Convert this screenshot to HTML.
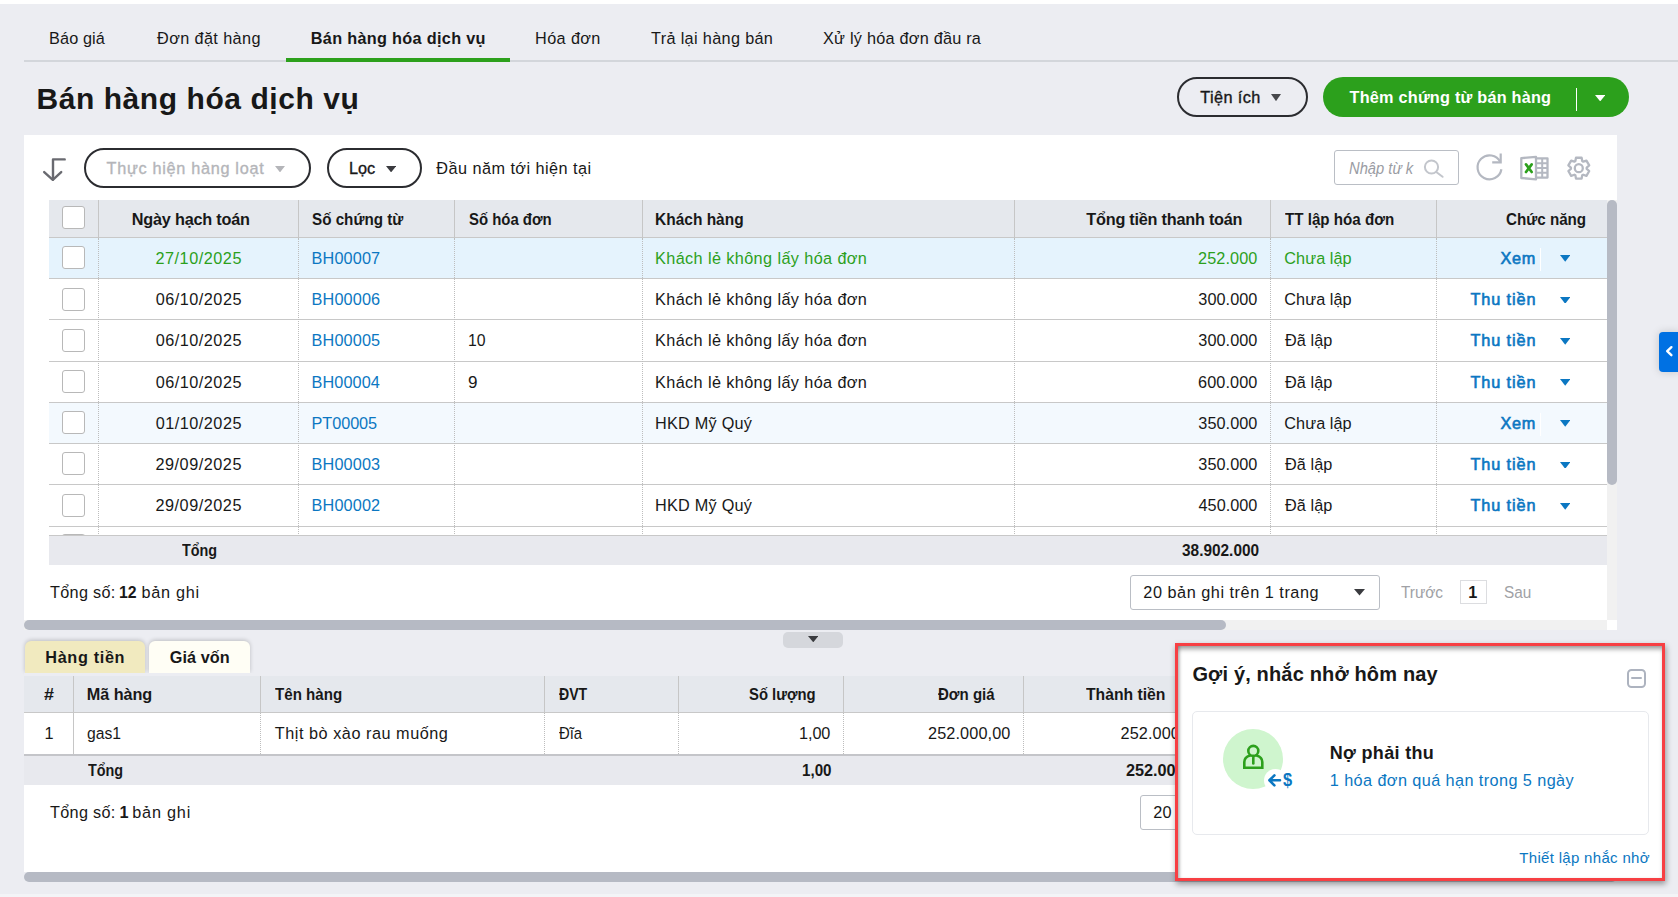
<!DOCTYPE html>
<html lang="vi">
<head>
<meta charset="utf-8">
<title>Bán hàng hóa dịch vụ</title>
<style>
*{box-sizing:border-box}
html,body{margin:0;padding:0}
body{width:1678px;height:897px;overflow:hidden;position:relative;background:#ecedf2;font-family:"Liberation Sans","DejaVu Sans",sans-serif;color:#181818}
div,span,a,h1,h2,b,i,label,button,svg,section,nav,header,footer{position:absolute;margin:0;padding:0}
.t{white-space:pre;display:block;text-decoration:none;font-weight:400}
.cb{width:23px;height:23px;border:1px solid #b8b8b8;border-radius:3px;background:#fff}
.vs{width:1px;background:#c6c6c6}
.vd{width:0;border-left:1px dotted #bdbdbd}
.hl{height:1px;background:#c8c8c8}

</style>
</head>
<body>
<div style="left:0px;top:0px;width:1678px;height:4px;background:#fff"></div>
<div style="left:0px;top:894.4px;width:1678px;height:2.6px;background:#f3f4f7"></div>
<nav style="left:0;top:0;width:1678px;height:62px">
<div style="left:24px;top:60px;width:1654px;height:2px;background:#d3d6db"></div>
<div style="left:286px;top:57.5px;width:224px;height:4.5px;background:#2ca01c"></div>
<a class="t" style="left:49.03px;top:28.00px;font-size:16.25px;line-height:20px;color:#181818;letter-spacing:0.125px;">Báo giá</a>
<a class="t" style="left:157.05px;top:28.00px;font-size:16.25px;line-height:20px;color:#181818;letter-spacing:0.379px;">Đơn đặt hàng</a>
<a class="t" style="left:310.78px;top:28.00px;font-size:16.25px;line-height:20px;color:#181818;font-weight:700;letter-spacing:0.312px;">Bán hàng hóa dịch vụ</a>
<a class="t" style="left:535.03px;top:28.00px;font-size:16.25px;line-height:20px;color:#181818;letter-spacing:0.388px;">Hóa đơn</a>
<a class="t" style="left:651.05px;top:28.00px;font-size:16.25px;line-height:20px;color:#181818;letter-spacing:0.335px;">Trả lại hàng bán</a>
<a class="t" style="left:823.05px;top:28.00px;font-size:16.25px;line-height:20px;color:#181818;letter-spacing:0.233px;">Xử lý hóa đơn đầu ra</a>
</nav>
<h1 class="t" style="left:36.42px;top:79.50px;font-size:30px;line-height:38px;color:#181818;font-weight:700;letter-spacing:0.569px;">Bán hàng hóa dịch vụ</h1>
<div style="left:1177px;top:77px;width:131px;height:40px;border:2px solid #2b2c30;border-radius:20px"></div>
<span class="t" style="left:1200.25px;top:87.00px;font-size:16.25px;line-height:20px;color:#181818;letter-spacing:0.409px;-webkit-text-stroke:0.35px #181818;">Tiện ích</span>
<svg style="left:1271px;top:94px" width="10" height="7.2" viewBox="0 0 10 7.2"><path d="M0 0h10L5 7.2z" fill="#47484c"/></svg>
<div style="left:1323px;top:77px;width:306px;height:40px;background:#2ca01c;border-radius:20px"></div>
<span class="t" style="left:1349.50px;top:87.00px;font-size:16.25px;line-height:20px;color:#fff;font-weight:700;letter-spacing:0.223px;">Thêm chứng từ bán hàng</span>
<div style="left:1575.8px;top:88px;width:1.3px;height:23px;background:#fff"></div>
<svg style="left:1595px;top:95px" width="10.4" height="6.4" viewBox="0 0 10.4 6.4"><path d="M0 0h10.4L5.2 6.4z" fill="#fff"/></svg>
<section style="left:0;top:0;width:1678px;height:640px">
<div style="left:24px;top:135px;width:1593px;height:495px;background:#fff"></div>
<svg style="left:42px;top:157px" width="25" height="25" viewBox="42 157 25 25" fill="none" stroke="#696a70" stroke-width="2.4" stroke-linecap="round" stroke-linejoin="round"><path d="M64.7 159.4H53V179.6"/><path d="M44.2 172.1L52.8 179.8L61.2 172.1"/></svg>
<div style="left:84px;top:148.3px;width:227.3px;height:39.3px;border:2px solid #2b2c30;border-radius:20px"></div>
<span class="t" style="left:106.55px;top:158.00px;font-size:16.25px;line-height:20px;color:#b4b5b9;letter-spacing:0.695px;-webkit-text-stroke:0.35px #b4b5b9;">Thực hiện hàng loạt</span>
<svg style="left:274.5px;top:165.8px" width="10" height="6.4" viewBox="0 0 10 6.4"><path d="M0 0h10L5 6.4z" fill="#b4b5b9"/></svg>
<div style="left:326.8px;top:148.3px;width:95.3px;height:39.3px;border:2px solid #2b2c30;border-radius:20px"></div>
<span class="t" style="left:349.03px;top:158.00px;font-size:16.25px;line-height:20px;color:#181818;letter-spacing:0.012px;-webkit-text-stroke:0.35px #181818;">Lọc</span>
<svg style="left:385.5px;top:165.8px" width="10.2" height="6.4" viewBox="0 0 10.2 6.4"><path d="M0 0h10.2L5.1 6.4z" fill="#3a3b3f"/></svg>
<span class="t" style="left:436.30px;top:158.00px;font-size:16.25px;line-height:20px;color:#181818;letter-spacing:0.454px;">Đầu năm tới hiện tại</span>
<div style="left:1334px;top:150px;width:124.5px;height:34.5px;border:1px solid #babec5;border-radius:3px;background:#fff"></div>
<span class="t" style="left:1348.57px;top:158.00px;font-size:16.25px;line-height:20px;color:#9a9ca3;font-style:italic;transform:scaleX(0.9071);transform-origin:0 0;">Nhập từ k</span>
<svg style="left:1422px;top:157px" width="24" height="24" viewBox="1422 157 24 24" fill="none" stroke="#c3c6cc" stroke-width="2" stroke-linecap="round"><circle cx="1431.5" cy="167" r="6.6"/><path d="M1436.6 172.2L1442.6 176.8"/></svg>
<svg style="left:1474px;top:151px" width="32" height="32" viewBox="1474 151 32 32" fill="none" stroke="#b4b8c1" stroke-width="2.2" stroke-linecap="butt" stroke-linejoin="miter"><path d="M1500.3 162.0A12 12 0 1 0 1501.4 169.3"/><path d="M1500.7 153.4V162.3H1492.2"/></svg>
<svg style="left:1518px;top:154px" width="32" height="28" viewBox="1518 154 32 28" fill="none" stroke="#b4b8c1" stroke-width="2.3" stroke-linejoin="round"><path d="M1521.3 158.2L1536 156.8V179.4L1521.3 178z" fill="#fff"/><path d="M1536.9 158.3H1547.5V177.6H1536.9" /><path d="M1536.9 163.2H1547.5M1536.9 168H1547.5M1536.9 172.8H1547.5M1542.2 158.3V177.6" stroke-width="2"/><path d="M1526 164.4L1531.7 172M1531.7 164.4L1526 172" stroke="#2ca01c" stroke-width="2.7" stroke-linecap="round"/></svg>
<svg style="left:1564px;top:153px" width="30" height="30" viewBox="1564 153 30 30" fill="none" stroke="#b4b8c1" stroke-width="2.3" stroke-linejoin="round"><path d="M1576.00 157.77L1581.60 157.77L1582.24 161.09L1583.24 161.67L1586.44 160.56L1589.23 165.40L1586.68 167.62L1586.68 168.78L1589.23 171.00L1586.44 175.84L1583.24 174.73L1582.24 175.31L1581.60 178.63L1576.00 178.63L1575.36 175.31L1574.36 174.73L1571.16 175.84L1568.37 171.00L1570.92 168.78L1570.92 167.62L1568.37 165.40L1571.16 160.56L1574.36 161.67L1575.36 161.09z"/><circle cx="1578.8" cy="168.2" r="4"/></svg>
<div style="left:49px;top:200px;width:1558px;height:37.5px;background:#e5e8ed"></div>
<div style="left:49px;top:237px;width:1558px;height:1px;background:#c8c8c8"></div>
<div class="vs" style="left:97.75px;top:200px;width:1px;height:37.5px;"></div>
<div class="vs" style="left:297.5px;top:200px;width:1px;height:37.5px;"></div>
<div class="vs" style="left:453.75px;top:200px;width:1px;height:37.5px;"></div>
<div class="vs" style="left:641.5px;top:200px;width:1px;height:37.5px;"></div>
<div class="vs" style="left:1013.75px;top:200px;width:1px;height:37.5px;"></div>
<div class="vs" style="left:1270px;top:200px;width:1px;height:37.5px;"></div>
<div class="vs" style="left:1435.75px;top:200px;width:1px;height:37.5px;"></div>
<div class="cb" style="left:62px;top:206.3px;width:23px;height:23px;"></div>
<span class="t" style="left:131.78px;top:209.00px;font-size:16.25px;line-height:20px;color:#181818;font-weight:700;letter-spacing:-0.211px;">Ngày hạch toán</span>
<span class="t" style="left:312.36px;top:209.00px;font-size:16.25px;line-height:20px;color:#181818;font-weight:700;transform:scaleX(0.9357);transform-origin:0 0;">Số chứng từ</span>
<span class="t" style="left:468.57px;top:209.00px;font-size:16.25px;line-height:20px;color:#181818;font-weight:700;transform:scaleX(0.9175);transform-origin:0 0;">Số hóa đơn</span>
<span class="t" style="left:655.33px;top:209.00px;font-size:16.25px;line-height:20px;color:#181818;font-weight:700;transform:scaleX(0.9534);transform-origin:0 0;">Khách hàng</span>
<span class="t" style="left:1086.30px;top:209.00px;font-size:16.25px;line-height:20px;color:#181818;font-weight:700;letter-spacing:-0.233px;">Tổng tiền thanh toán</span>
<span class="t" style="left:1285.05px;top:209.00px;font-size:16.25px;line-height:20px;color:#181818;font-weight:700;transform:scaleX(0.9318);transform-origin:0 0;">TT lập hóa đơn</span>
<span class="t" style="left:1506.33px;top:209.00px;font-size:16.25px;line-height:20px;color:#181818;font-weight:700;transform:scaleX(0.9341);transform-origin:0 0;">Chức năng</span>
<div style="left:49px;top:238px;width:1558px;height:41.25px;background:#e5f3fd"></div>
<div style="left:49px;top:278px;width:1558px;height:1px;background:#c8c8c8"></div>
<div class="cb" style="left:62px;top:246.3px;width:23px;height:23px;"></div>
<span class="t" style="left:155.44px;top:248.00px;font-size:16.25px;line-height:20px;color:#2ca01c;letter-spacing:0.521px;">27/10/2025</span>
<a class="t" style="left:311.53px;top:248.00px;font-size:16.25px;line-height:20px;color:#0b77c2;letter-spacing:0.144px;">BH00007</a>
<span class="t" style="left:655.03px;top:248.00px;font-size:16.25px;line-height:20px;color:#2ca01c;letter-spacing:0.388px;">Khách lẻ không lấy hóa đơn</span>
<span class="t" style="left:1198.04px;top:248.00px;font-size:16.25px;line-height:20px;color:#2ca01c;letter-spacing:0.104px;">252.000</span>
<span class="t" style="left:1284.29px;top:248.00px;font-size:16.25px;line-height:20px;color:#2ca01c;letter-spacing:0.069px;">Chưa lập</span>
<a class="t" style="left:1500.55px;top:248.00px;font-size:16.25px;line-height:20px;color:#0b77c2;letter-spacing:0.691px;-webkit-text-stroke:0.6px #0b77c2;">Xem</a>
<div style="left:1539.8px;top:247.5px;width:1.2px;height:23.5px;background:#fff"></div>
<svg style="left:1560px;top:255.30px" width="10.4" height="6.8" viewBox="0 0 10.4 6.8"><path d="M0 0h10.4L5.2 6.8z" fill="#0b77c2"/></svg>
<div style="left:49px;top:319px;width:1558px;height:1px;background:#c8c8c8"></div>
<div class="cb" style="left:62px;top:288.3px;width:23px;height:23px;"></div>
<span class="t" style="left:155.69px;top:289.00px;font-size:16.25px;line-height:20px;color:#181818;letter-spacing:0.493px;">06/10/2025</span>
<a class="t" style="left:311.53px;top:289.00px;font-size:16.25px;line-height:20px;color:#0b77c2;letter-spacing:0.144px;">BH00006</a>
<span class="t" style="left:655.03px;top:289.00px;font-size:16.25px;line-height:20px;color:#181818;letter-spacing:0.388px;">Khách lẻ không lấy hóa đơn</span>
<span class="t" style="left:1198.29px;top:289.00px;font-size:16.25px;line-height:20px;color:#181818;letter-spacing:0.062px;">300.000</span>
<span class="t" style="left:1284.29px;top:289.00px;font-size:16.25px;line-height:20px;color:#181818;letter-spacing:0.069px;">Chưa lập</span>
<a class="t" style="left:1470.55px;top:289.00px;font-size:16.25px;line-height:20px;color:#0b77c2;letter-spacing:0.879px;-webkit-text-stroke:0.6px #0b77c2;">Thu tiền</a>
<svg style="left:1560px;top:296.55px" width="10.4" height="6.8" viewBox="0 0 10.4 6.8"><path d="M0 0h10.4L5.2 6.8z" fill="#0b77c2"/></svg>
<div style="left:49px;top:361px;width:1558px;height:1px;background:#c8c8c8"></div>
<div class="cb" style="left:62px;top:329.3px;width:23px;height:23px;"></div>
<span class="t" style="left:155.69px;top:330.00px;font-size:16.25px;line-height:20px;color:#181818;letter-spacing:0.493px;">06/10/2025</span>
<a class="t" style="left:311.53px;top:330.00px;font-size:16.25px;line-height:20px;color:#0b77c2;letter-spacing:0.144px;">BH00005</a>
<span class="t" style="left:467.81px;top:330.00px;font-size:16.25px;line-height:20px;color:#181818;transform:scaleX(0.9727);transform-origin:0 0;">10</span>
<span class="t" style="left:655.03px;top:330.00px;font-size:16.25px;line-height:20px;color:#181818;letter-spacing:0.388px;">Khách lẻ không lấy hóa đơn</span>
<span class="t" style="left:1198.29px;top:330.00px;font-size:16.25px;line-height:20px;color:#181818;letter-spacing:0.062px;">300.000</span>
<span class="t" style="left:1285.05px;top:330.00px;font-size:16.25px;line-height:20px;color:#181818;letter-spacing:0.077px;">Đã lập</span>
<a class="t" style="left:1470.55px;top:330.00px;font-size:16.25px;line-height:20px;color:#0b77c2;letter-spacing:0.879px;-webkit-text-stroke:0.6px #0b77c2;">Thu tiền</a>
<svg style="left:1560px;top:337.80px" width="10.4" height="6.8" viewBox="0 0 10.4 6.8"><path d="M0 0h10.4L5.2 6.8z" fill="#0b77c2"/></svg>
<div style="left:49px;top:402px;width:1558px;height:1px;background:#c8c8c8"></div>
<div class="cb" style="left:62px;top:370.3px;width:23px;height:23px;"></div>
<span class="t" style="left:155.69px;top:372.00px;font-size:16.25px;line-height:20px;color:#181818;letter-spacing:0.493px;">06/10/2025</span>
<a class="t" style="left:311.53px;top:372.00px;font-size:16.25px;line-height:20px;color:#0b77c2;letter-spacing:0.102px;">BH00004</a>
<span class="t" style="left:467.70px;top:372.00px;font-size:16.25px;line-height:20px;color:#181818;transform:scaleX(1.0503);transform-origin:0 0;">9</span>
<span class="t" style="left:655.03px;top:372.00px;font-size:16.25px;line-height:20px;color:#181818;letter-spacing:0.388px;">Khách lẻ không lấy hóa đơn</span>
<span class="t" style="left:1198.04px;top:372.00px;font-size:16.25px;line-height:20px;color:#181818;letter-spacing:0.104px;">600.000</span>
<span class="t" style="left:1285.05px;top:372.00px;font-size:16.25px;line-height:20px;color:#181818;letter-spacing:0.077px;">Đã lập</span>
<a class="t" style="left:1470.55px;top:372.00px;font-size:16.25px;line-height:20px;color:#0b77c2;letter-spacing:0.879px;-webkit-text-stroke:0.6px #0b77c2;">Thu tiền</a>
<svg style="left:1560px;top:379.05px" width="10.4" height="6.8" viewBox="0 0 10.4 6.8"><path d="M0 0h10.4L5.2 6.8z" fill="#0b77c2"/></svg>
<div style="left:49px;top:403px;width:1558px;height:41.25px;background:#f3f9fe"></div>
<div style="left:49px;top:443px;width:1558px;height:1px;background:#c8c8c8"></div>
<div class="cb" style="left:62px;top:411.3px;width:23px;height:23px;"></div>
<span class="t" style="left:155.69px;top:413.00px;font-size:16.25px;line-height:20px;color:#181818;letter-spacing:0.493px;">01/10/2025</span>
<a class="t" style="left:311.53px;top:413.00px;font-size:16.25px;line-height:20px;color:#0b77c2;letter-spacing:-0.054px;">PT00005</a>
<span class="t" style="left:655.03px;top:413.00px;font-size:16.25px;line-height:20px;color:#181818;letter-spacing:0.241px;">HKD Mỹ Quý</span>
<span class="t" style="left:1198.29px;top:413.00px;font-size:16.25px;line-height:20px;color:#181818;letter-spacing:0.062px;">350.000</span>
<span class="t" style="left:1284.29px;top:413.00px;font-size:16.25px;line-height:20px;color:#181818;letter-spacing:0.069px;">Chưa lập</span>
<a class="t" style="left:1500.55px;top:413.00px;font-size:16.25px;line-height:20px;color:#0b77c2;letter-spacing:0.691px;-webkit-text-stroke:0.6px #0b77c2;">Xem</a>
<div style="left:1539.8px;top:412.5px;width:1.2px;height:23.5px;background:#fff"></div>
<svg style="left:1560px;top:420.30px" width="10.4" height="6.8" viewBox="0 0 10.4 6.8"><path d="M0 0h10.4L5.2 6.8z" fill="#0b77c2"/></svg>
<div style="left:49px;top:484px;width:1558px;height:1px;background:#c8c8c8"></div>
<div class="cb" style="left:62px;top:452.3px;width:23px;height:23px;"></div>
<span class="t" style="left:155.44px;top:454.00px;font-size:16.25px;line-height:20px;color:#181818;letter-spacing:0.521px;">29/09/2025</span>
<a class="t" style="left:311.53px;top:454.00px;font-size:16.25px;line-height:20px;color:#0b77c2;letter-spacing:0.144px;">BH00003</a>
<span class="t" style="left:1198.29px;top:454.00px;font-size:16.25px;line-height:20px;color:#181818;letter-spacing:0.062px;">350.000</span>
<span class="t" style="left:1285.05px;top:454.00px;font-size:16.25px;line-height:20px;color:#181818;letter-spacing:0.077px;">Đã lập</span>
<a class="t" style="left:1470.55px;top:454.00px;font-size:16.25px;line-height:20px;color:#0b77c2;letter-spacing:0.879px;-webkit-text-stroke:0.6px #0b77c2;">Thu tiền</a>
<svg style="left:1560px;top:461.55px" width="10.4" height="6.8" viewBox="0 0 10.4 6.8"><path d="M0 0h10.4L5.2 6.8z" fill="#0b77c2"/></svg>
<div style="left:49px;top:526px;width:1558px;height:1px;background:#c8c8c8"></div>
<div class="cb" style="left:62px;top:494.3px;width:23px;height:23px;"></div>
<span class="t" style="left:155.44px;top:495.00px;font-size:16.25px;line-height:20px;color:#181818;letter-spacing:0.521px;">29/09/2025</span>
<a class="t" style="left:311.53px;top:495.00px;font-size:16.25px;line-height:20px;color:#0b77c2;letter-spacing:0.144px;">BH00002</a>
<span class="t" style="left:655.03px;top:495.00px;font-size:16.25px;line-height:20px;color:#181818;letter-spacing:0.241px;">HKD Mỹ Quý</span>
<span class="t" style="left:1198.55px;top:495.00px;font-size:16.25px;line-height:20px;color:#181818;letter-spacing:0.020px;">450.000</span>
<span class="t" style="left:1285.05px;top:495.00px;font-size:16.25px;line-height:20px;color:#181818;letter-spacing:0.077px;">Đã lập</span>
<a class="t" style="left:1470.55px;top:495.00px;font-size:16.25px;line-height:20px;color:#0b77c2;letter-spacing:0.879px;-webkit-text-stroke:0.6px #0b77c2;">Thu tiền</a>
<svg style="left:1560px;top:502.80px" width="10.4" height="6.8" viewBox="0 0 10.4 6.8"><path d="M0 0h10.4L5.2 6.8z" fill="#0b77c2"/></svg>
<div class="cb" style="left:62px;top:534.2px;width:23px;height:6px;border-bottom:0;border-radius:3px 3px 0 0"></div>
<div class="vd" style="left:97.75px;top:238px;width:0px;height:296px;"></div>
<div class="vd" style="left:297.5px;top:238px;width:0px;height:296px;"></div>
<div class="vd" style="left:453.75px;top:238px;width:0px;height:296px;"></div>
<div class="vd" style="left:641.5px;top:238px;width:0px;height:296px;"></div>
<div class="vd" style="left:1013.75px;top:238px;width:0px;height:296px;"></div>
<div class="vd" style="left:1270px;top:238px;width:0px;height:296px;"></div>
<div class="vd" style="left:1435.75px;top:238px;width:0px;height:296px;"></div>
<div style="left:49px;top:535px;width:1558px;height:29.5px;background:#e8e9ee;border-top:1px solid #c8c8c8"></div>
<span class="t" style="left:181.65px;top:540.00px;font-size:16.25px;line-height:20px;color:#181818;font-weight:700;transform:scaleX(0.8845);transform-origin:0 0;">Tổng</span>
<span class="t" style="left:1182.16px;top:540.00px;font-size:16.25px;line-height:20px;color:#181818;font-weight:700;transform:scaleX(0.9476);transform-origin:0 0;">38.902.000</span>
<div style="left:1607px;top:200px;width:10px;height:420px;background:#f1f1f1"></div>
<div style="left:1607px;top:200px;width:10px;height:285px;background:#b6bac4;border-radius:5px"></div>
<div style="left:24px;top:620px;width:1583px;height:10px;background:#f1f1f1"></div>
<div style="left:24px;top:620px;width:1202px;height:9.5px;background:#b6bac4;border-radius:5px"></div>
<div style="left:1607px;top:620px;width:10px;height:10px;background:#fff"></div>
<span class="t" style="left:50.05px;top:582.00px;font-size:16.25px;line-height:20px;color:#181818;letter-spacing:0.277px;">Tổng số:</span>
<span class="t" style="left:119.06px;top:582.00px;font-size:16.25px;line-height:20px;color:#181818;font-weight:700;transform:scaleX(0.9727);transform-origin:0 0;">12</span>
<span class="t" style="left:141.53px;top:582.00px;font-size:16.25px;line-height:20px;color:#181818;letter-spacing:0.704px;">bản ghi</span>
<div style="left:1130px;top:575px;width:250px;height:35px;border:1px solid #babec5;border-radius:3px;background:#fff"></div>
<span class="t" style="left:1143.34px;top:582.00px;font-size:16.25px;line-height:20px;color:#181818;letter-spacing:0.530px;">20 bản ghi trên 1 trang</span>
<svg style="left:1354.3px;top:589.4px" width="11" height="6.6" viewBox="0 0 11 6.6"><path d="M0 0h11L5.5 6.6z" fill="#3a3b3f"/></svg>
<span class="t" style="left:1401.06px;top:582.00px;font-size:16.25px;line-height:20px;color:#a0a1a5;transform:scaleX(0.9456);transform-origin:0 0;">Trước</span>
<div style="left:1460px;top:580px;width:27px;height:23.7px;border:1px solid #dcdde0;background:#fff"></div>
<span class="t" style="left:1468.18px;top:582.00px;font-size:16.25px;line-height:20px;color:#181818;font-weight:700;">1</span>
<span class="t" style="left:1504.22px;top:582.00px;font-size:16.25px;line-height:20px;color:#a0a1a5;transform:scaleX(0.9457);transform-origin:0 0;">Sau</span>
</section>
<div style="left:782.5px;top:632px;width:60px;height:16px;background:#d5d7dc;border-radius:5px"></div>
<svg style="left:807.5px;top:635.5px" width="10.5" height="6.3" viewBox="0 0 10.5 6.3"><path d="M0 0h10.5L5.25 6.3z" fill="#3a3b3f"/></svg>
<section style="left:0;top:0;width:1678px;height:897px">
<div style="left:24.5px;top:641px;width:120px;height:32px;background:#f1eabf;border-radius:6px 6px 0 0;box-shadow:0 -1px 4px rgba(0,0,0,.2)"></div>
<div style="left:148.8px;top:641px;width:100.8px;height:32px;background:#fffef5;border-radius:6px 6px 0 0;box-shadow:0 -1px 4px rgba(0,0,0,.2)"></div>
<div style="left:24px;top:673px;width:1593px;height:3px;background:#ecedf2"></div>
<span class="t" style="left:45.28px;top:647.00px;font-size:16.25px;line-height:20px;color:#181818;font-weight:700;letter-spacing:0.653px;">Hàng tiền</span>
<span class="t" style="left:169.79px;top:647.00px;font-size:16.25px;line-height:20px;color:#181818;font-weight:700;letter-spacing:0.066px;">Giá vốn</span>
<div style="left:24px;top:675.75px;width:1593px;height:196.5px;background:#fff"></div>
<div style="left:24px;top:675.75px;width:1593px;height:36.5px;background:#e5e8ed"></div>
<div style="left:24px;top:712px;width:1593px;height:1px;background:#c8c8c8"></div>
<div class="vs" style="left:72.75px;top:676px;width:1px;height:36px;"></div>
<div class="vs" style="left:259.5px;top:676px;width:1px;height:36px;"></div>
<div class="vs" style="left:543.75px;top:676px;width:1px;height:36px;"></div>
<div class="vs" style="left:677.5px;top:676px;width:1px;height:36px;"></div>
<div class="vs" style="left:842.5px;top:676px;width:1px;height:36px;"></div>
<div class="vs" style="left:1022.75px;top:676px;width:1px;height:36px;"></div>
<div class="vs" style="left:1203px;top:676px;width:1px;height:36px;"></div>
<div class="vs" style="left:72.75px;top:713px;width:1px;height:41px;"></div>
<div class="vd" style="left:259.5px;top:713px;width:0px;height:41px;"></div>
<div class="vd" style="left:543.75px;top:713px;width:0px;height:41px;"></div>
<div class="vd" style="left:677.5px;top:713px;width:0px;height:41px;"></div>
<div class="vd" style="left:842.5px;top:713px;width:0px;height:41px;"></div>
<div class="vd" style="left:1022.75px;top:713px;width:0px;height:41px;"></div>
<div class="vd" style="left:1203px;top:713px;width:0px;height:41px;"></div>
<span class="t" style="left:43.97px;top:684.00px;font-size:16.25px;line-height:20px;color:#181818;font-weight:700;transform:scaleX(1.1005);transform-origin:0 0;">#</span>
<span class="t" style="left:86.78px;top:684.00px;font-size:16.25px;line-height:20px;color:#181818;font-weight:700;letter-spacing:-0.067px;">Mã hàng</span>
<span class="t" style="left:275.05px;top:684.00px;font-size:16.25px;line-height:20px;color:#181818;font-weight:700;transform:scaleX(0.9300);transform-origin:0 0;">Tên hàng</span>
<span class="t" style="left:558.80px;top:684.00px;font-size:16.25px;line-height:20px;color:#181818;font-weight:700;transform:scaleX(0.8683);transform-origin:0 0;">ĐVT</span>
<span class="t" style="left:748.82px;top:684.00px;font-size:16.25px;line-height:20px;color:#181818;font-weight:700;transform:scaleX(0.9132);transform-origin:0 0;">Số lượng</span>
<span class="t" style="left:938.30px;top:684.00px;font-size:16.25px;line-height:20px;color:#181818;font-weight:700;transform:scaleX(0.9248);transform-origin:0 0;">Đơn giá</span>
<span class="t" style="left:1085.80px;top:684.00px;font-size:16.25px;line-height:20px;color:#181818;font-weight:700;transform:scaleX(0.9673);transform-origin:0 0;">Thành tiền</span>
<span class="t" style="left:44.48px;top:723.00px;font-size:16.25px;line-height:20px;color:#181818;">1</span>
<span class="t" style="left:87.31px;top:723.00px;font-size:16.25px;line-height:20px;color:#181818;transform:scaleX(0.9671);transform-origin:0 0;">gas1</span>
<span class="t" style="left:274.80px;top:723.00px;font-size:16.25px;line-height:20px;color:#181818;letter-spacing:0.526px;">Thịt bò xào rau muống</span>
<span class="t" style="left:558.80px;top:723.00px;font-size:16.25px;line-height:20px;color:#181818;transform:scaleX(0.9137);transform-origin:0 0;">Đĩa</span>
<span class="t" style="left:799.03px;top:723.00px;font-size:16.25px;line-height:20px;color:#181818;letter-spacing:-0.086px;">1,00</span>
<span class="t" style="left:928.04px;top:723.00px;font-size:16.25px;line-height:20px;color:#181818;letter-spacing:0.115px;">252.000,00</span>
<span class="t" style="left:1120.54px;top:723.00px;font-size:16.25px;line-height:20px;color:#181818;letter-spacing:0.104px;">252.000</span>
<div style="left:24px;top:753.5px;width:1593px;height:2px;background:#c4c5c9"></div>
<div style="left:24px;top:755.5px;width:1593px;height:29px;background:#e8e9ee"></div>
<span class="t" style="left:87.80px;top:760.00px;font-size:16.25px;line-height:20px;color:#181818;font-weight:700;transform:scaleX(0.8845);transform-origin:0 0;">Tổng</span>
<span class="t" style="left:801.85px;top:760.00px;font-size:16.25px;line-height:20px;color:#181818;font-weight:700;transform:scaleX(0.9331);transform-origin:0 0;">1,00</span>
<span class="t" style="left:1126.04px;top:760.00px;font-size:16.25px;line-height:20px;color:#181818;font-weight:700;letter-spacing:-0.062px;">252.000</span>
<span class="t" style="left:50.05px;top:802.00px;font-size:16.25px;line-height:20px;color:#181818;letter-spacing:0.277px;">Tổng số:</span>
<span class="t" style="left:119.48px;top:802.00px;font-size:16.25px;line-height:20px;color:#181818;font-weight:700;">1</span>
<span class="t" style="left:132.28px;top:802.00px;font-size:16.25px;line-height:20px;color:#181818;letter-spacing:0.787px;">bản ghi</span>
<div style="left:1140px;top:795px;width:250px;height:35px;border:1px solid #babec5;border-radius:3px;background:#fff"></div>
<span class="t" style="left:1153.29px;top:802.00px;font-size:16.25px;line-height:20px;color:#181818;letter-spacing:0.291px;">20</span>
<div style="left:24px;top:872px;width:1593px;height:10px;background:#b6bac4;border-radius:5px"></div>
</section>
<div style="left:1659px;top:332px;width:22px;height:40px;background:#0071e3;border-radius:4px;box-shadow:0 0 8px rgba(0,0,0,.17)"></div>
<svg style="left:1664px;top:344px" width="12" height="14" viewBox="1664 344 12 14" fill="none" stroke="#fff" stroke-width="2.4" stroke-linecap="round" stroke-linejoin="round"><path d="M1671.4 347.2L1667.2 351.2L1671.4 355.2"/></svg>
<aside style="position:absolute;left:1175px;top:643px;width:490px;height:238px;background:#fff;border:3px solid #f73f43;box-shadow:1px 3px 6px rgba(0,0,0,.38), inset 0 5px 5px -2px rgba(0,0,0,.38), inset 3px 0 3px -1px rgba(0,0,0,.22)">
</aside>
<h2 class="t" style="left:1192.38px;top:661.50px;font-size:20px;line-height:25px;color:#181818;font-weight:700;letter-spacing:0.159px;">Gợi ý, nhắc nhở hôm nay</h2>
<div style="left:1626.6px;top:668.6px;width:19.6px;height:19.6px;border:2px solid #adb3bf;border-radius:4.5px"></div>
<div style="left:1631.4px;top:677.2px;width:10.2px;height:2.2px;background:#adb3bf;border-radius:1px"></div>
<div style="left:1192px;top:710.5px;width:456.5px;height:124px;border:1px solid #e7e9ed;border-radius:5px"></div>
<div style="left:1222.5px;top:728.7px;width:60px;height:60px;background:#cff5ce;border-radius:50%"></div>
<svg style="left:1238px;top:742px" width="30" height="30" viewBox="1238 742 30 30" fill="none" stroke="#2ca01c" stroke-width="2.6" stroke-linejoin="round" stroke-linecap="round"><circle cx="1253.3" cy="750.9" r="5"/><path d="M1250 755.4C1246.6 756.4 1244.3 758 1244.3 762V767.8H1262.3V762C1262.3 758 1260 756.4 1256.6 755.4" stroke-linejoin="miter"/><path d="M1253.3 757.6V763.4"/></svg>
<div style="left:1264px;top:768.5px;width:23px;height:23px;background:#fff;border-radius:50%"></div>
<svg style="left:1266px;top:771px" width="28" height="20" viewBox="1266 771 28 20" fill="none" stroke="#0b77c2" stroke-width="2.6" stroke-linecap="round" stroke-linejoin="round"><path d="M1280 780.3H1270M1274.4 775.4L1269.4 780.3L1274.4 785.3"/></svg>
<span class="t" style="left:1283.10px;top:769.00px;font-size:17.5px;line-height:22px;color:#0b77c2;font-weight:700;transform:scaleX(0.9404);transform-origin:0 0;">$</span>
<span class="t" style="left:1329.67px;top:742.00px;font-size:18px;line-height:22px;color:#181818;font-weight:700;letter-spacing:0.339px;">Nợ phải thu</span>
<a class="t" style="left:1329.78px;top:770.00px;font-size:16.25px;line-height:20px;color:#0b77c2;letter-spacing:0.410px;">1 hóa đơn quá hạn trong 5 ngày</a>
<a class="t" style="left:1519.27px;top:848.00px;font-size:15px;line-height:19px;color:#0b77c2;letter-spacing:0.315px;">Thiết lập nhắc nhở</a>
</body>
</html>
